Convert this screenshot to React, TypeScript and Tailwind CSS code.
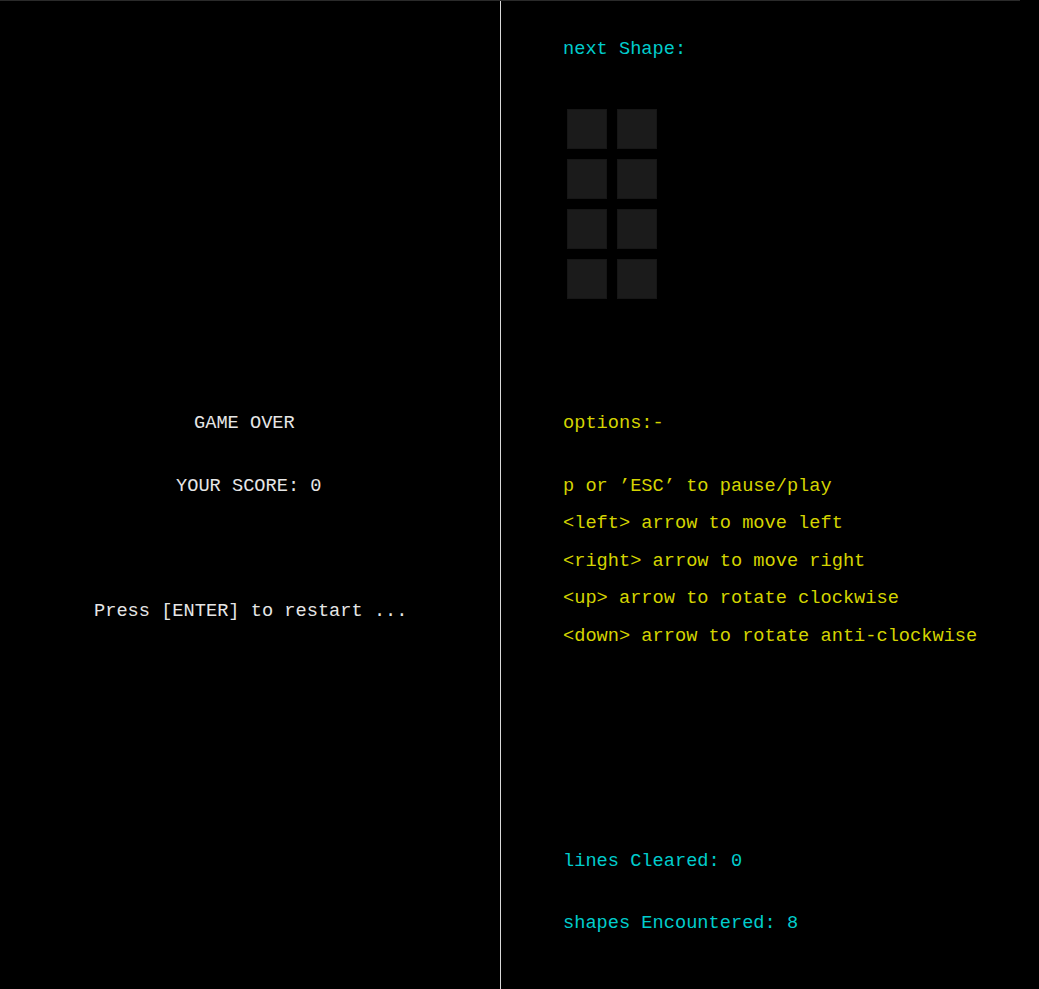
import React from "react";

const mono = { fontFamily: '"Liberation Mono", "DejaVu Sans Mono", monospace' };

export default function App() {
  const cells = Array.from({ length: 8 });
  return (
    <div className="bg-black min-h-screen w-full" style={mono}>
      <div className="w-[1020px] h-[989px] border-t border-[#2a2a2a] flex text-[18.67px] leading-[24px]">
        <div className="w-[501px] h-full border-r border-[#d8d8d8] flex flex-col text-[#e6e6e6] pt-[410px]">
          <div className="pl-[194px] whitespace-pre">GAME OVER</div>
          <div className="pl-[176px] mt-[39px] whitespace-pre">YOUR SCORE: 0</div>
          <div className="pl-[94px] mt-[101px] whitespace-pre">Press [ENTER] to restart ...</div>
        </div>
        <div className="flex-1 h-full flex flex-col pl-[62px] pt-[36px]">
          <div className="text-[#00cccc] whitespace-pre">next Shape:</div>
          <div className="mt-[43px] -ml-[1px] grid grid-cols-[50px_50px] w-[100px]">
            {cells.map((_, i) => (
              <div key={i} className="w-[50px] h-[50px] p-[5px]">
                <div className="w-full h-full bg-[#1b1b1b] border border-[#161616]" />
              </div>
            ))}
          </div>
          <div className="text-[#d4d400] mt-[107px] whitespace-pre">options:-</div>
          <div className="text-[#d4d400] mt-[39px] whitespace-pre">p or ’ESC’ to pause/play</div>
          <div className="text-[#d4d400] mt-[13px] whitespace-pre">&lt;left&gt; arrow to move left</div>
          <div className="text-[#d4d400] mt-[14px] whitespace-pre">&lt;right&gt; arrow to move right</div>
          <div className="text-[#d4d400] mt-[13px] whitespace-pre">&lt;up&gt; arrow to rotate clockwise</div>
          <div className="text-[#d4d400] mt-[14px] whitespace-pre">&lt;down&gt; arrow to rotate anti-clockwise</div>
          <div className="text-[#00cccc] mt-[201px] whitespace-pre">lines Cleared: 0</div>
          <div className="text-[#00cccc] mt-[38px] whitespace-pre">shapes Encountered: 8</div>
        </div>
      </div>
    </div>
  );
}
